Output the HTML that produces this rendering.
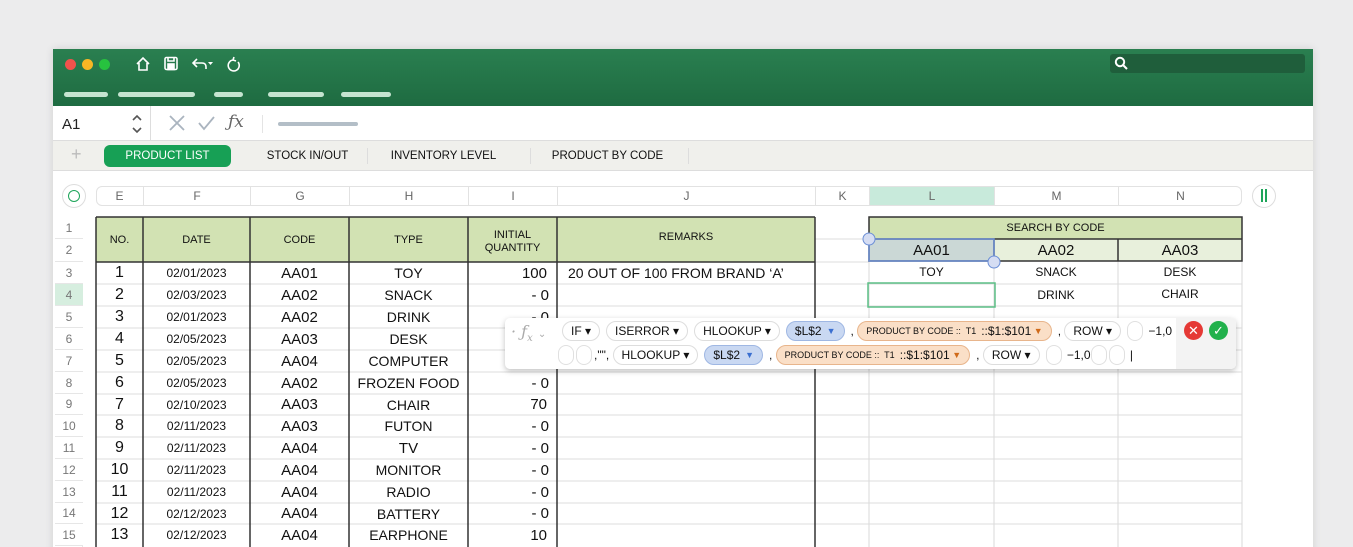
<!DOCTYPE html>
<html><head><meta charset="utf-8"><style>
*{box-sizing:border-box;margin:0;padding:0}
html,body{width:1353px;height:547px;overflow:hidden}
body{background:#ececed;font-family:"Liberation Sans",Arial,sans-serif;position:relative;color:#111}
.a{position:absolute}
.win{left:53px;top:49px;width:1260px;height:510px;background:#fff;box-shadow:0 0 8px rgba(0,0,0,.12)}
.hdr{left:53px;top:49px;width:1260px;height:57px;background:linear-gradient(#2a7f50,#1e6b41)}
.pill{height:5px;border-radius:3px;background:#c5e4d0;top:92px}
.dot{width:11px;height:11px;border-radius:50%;top:59px}
.cell{position:absolute;display:flex;align-items:center;justify-content:center;white-space:nowrap}
.ch{top:186px;height:20px;font-size:12px;color:#666;border-left:1px solid #e2e2e2}
.rn{left:55px;width:28px;font-size:12px;color:#777;border-bottom:1px solid #e6e6e6;background:#fff}
.tok{display:inline-flex;align-items:center;height:20px;border-radius:10px;border:1px solid #ddd;padding:0 8px;font-size:12px;margin-right:6px;background:#fff}
.blue{background:#c9d8f2;border-color:#9fb7e3}
.org{background:#fadfc7;border-color:#e8b58c}
.paren{display:inline-block;width:16px;height:20px;border:1px solid #e0e0e0;border-radius:10px;margin-right:2px;vertical-align:middle}
</style></head><body>
<div class="a win"></div>
<div class="a hdr"></div>
<div class="a dot" style="left:65px;background:#f0524c"></div>
<div class="a dot" style="left:82px;background:#f7b624"></div>
<div class="a dot" style="left:99px;background:#27c23f"></div>
<svg class="a" style="left:135px;top:55px" width="115" height="18" fill="none" stroke="#fff" stroke-width="1.6">
<path d="M2 9 L8 3 L14 9 M4 8 V15 H12 V8"/>
<rect x="30" y="2.5" width="12" height="12" rx="1.5"/><rect x="33" y="9" width="6" height="5.5" fill="#fff"/><path d="M33 3 V6 H39 V3"/>
<path d="M62 4 L58 8 L62 12 M58 8 H67 Q71 8 71 12 V14"/><path d="M73 7 H78 L75.5 10Z" fill="#fff" stroke="none"/>
<path d="M98 5 A5.5 5.5 0 1 0 103 7 M99 2 L98 5 L101 6"/>
</svg>
<div class="a" style="left:1110px;top:54px;width:195px;height:19px;background:#1f5e3b;border-radius:3px"></div>
<svg class="a" style="left:1114px;top:56px" width="16" height="16" fill="none" stroke="#fff" stroke-width="2"><circle cx="6" cy="6" r="4.2"/><path d="M9 9 L13 13"/></svg>
<div class="a pill" style="left:64px;width:44px"></div>
<div class="a pill" style="left:118px;width:77px"></div>
<div class="a pill" style="left:214px;width:29px"></div>
<div class="a pill" style="left:268px;width:56px"></div>
<div class="a pill" style="left:341px;width:50px"></div>
<div class="a" style="left:62px;top:116px;font-size:15px;color:#222">A1</div>
<svg class="a" style="left:130px;top:112px" width="14" height="24" fill="none" stroke="#555" stroke-width="1.6"><path d="M3 8 L7 4 L11 8 M3 16 L7 20 L11 16"/></svg>
<div class="a" style="left:150px;top:106px;width:1px;height:34px;background:#ddd"></div>
<svg class="a" style="left:167px;top:113px" width="90" height="20" fill="none" stroke-width="1.8"><path d="M3 3 L17 17 M17 3 L3 17" stroke="#aab4bf"/><path d="M32 10 L37 16 L47 4" stroke="#aab4bf"/></svg>
<div class="a" style="left:228px;top:112px;font-size:17px;font-style:italic;color:#666;font-family:'DejaVu Serif',serif">ƒx</div>
<div class="a" style="left:262px;top:115px;width:1px;height:18px;background:#e4e4e4"></div>
<div class="a" style="left:278px;top:122px;width:80px;height:4px;border-radius:2px;background:#b3bec7"></div>
<div class="a" style="left:53px;top:140px;width:1260px;height:31px;background:#f0f0ec;border-top:1px solid #ddd;border-bottom:1px solid #ddd"></div>
<div class="a" style="left:71px;top:144px;font-size:18px;color:#bbb">+</div>
<div class="cell" style="left:104px;top:145px;width:127px;height:22px;background:#17a055;border-radius:6px;color:#fff;font-size:11.5px">PRODUCT LIST</div>
<div class="cell" style="left:250px;top:145px;width:115px;height:22px;font-size:11.5px">STOCK IN/OUT</div>
<div class="a" style="left:367px;top:148px;width:1px;height:16px;background:#ddd"></div>
<div class="cell" style="left:375px;top:145px;width:137px;height:22px;font-size:11.5px">INVENTORY LEVEL</div>
<div class="a" style="left:530px;top:148px;width:1px;height:16px;background:#ddd"></div>
<div class="cell" style="left:540px;top:145px;width:135px;height:22px;font-size:11.5px">PRODUCT BY CODE</div>
<div class="a" style="left:688px;top:148px;width:1px;height:16px;background:#ddd"></div>
<div class="a" style="left:62px;top:184px;width:24px;height:24px;border-radius:50%;border:1px solid #ddd"></div>
<div class="a" style="left:68px;top:190px;width:12px;height:12px;border-radius:50%;border:1.5px solid #1ea55a"></div>
<div class="a" style="left:96px;top:186px;width:1146px;height:20px;border:1px solid #e2e2e2;border-radius:6px"></div>
<div class="a" style="left:869px;top:187px;width:125px;height:18px;background:#c8eadb"></div>
<div class="cell ch" style="left:96px;width:47px;border-left:none">E</div>
<div class="cell ch" style="left:143px;width:107px">F</div>
<div class="cell ch" style="left:250px;width:99px">G</div>
<div class="cell ch" style="left:349px;width:119px">H</div>
<div class="cell ch" style="left:468px;width:89px">I</div>
<div class="cell ch" style="left:557px;width:258px">J</div>
<div class="cell ch" style="left:815px;width:54px">K</div>
<div class="cell ch" style="left:869px;width:125px">L</div>
<div class="cell ch" style="left:994px;width:124px">M</div>
<div class="cell ch" style="left:1118px;width:124px">N</div>
<div class="a" style="left:1252px;top:184px;width:24px;height:24px;border-radius:50%;border:1px solid #ddd"></div>
<div class="a" style="left:1261px;top:189px;width:2px;height:13px;background:#1ea55a"></div>
<div class="a" style="left:1265px;top:189px;width:2px;height:13px;background:#1ea55a"></div>
<svg class="a" style="left:0;top:0" width="1353" height="547">
<g stroke="#d8d8d8" stroke-width="1">
<line x1="815" y1="217" x2="815" y2="547"/><line x1="869" y1="217" x2="869" y2="547"/>
<line x1="994" y1="261" x2="994" y2="547"/><line x1="1118" y1="261" x2="1118" y2="547"/><line x1="1242" y1="261" x2="1242" y2="547"/>
</g>
<g stroke="#dcdcdc">
<line x1="96" y1="284" x2="1242" y2="284"/><line x1="96" y1="306" x2="1242" y2="306"/><line x1="96" y1="328" x2="1242" y2="328"/><line x1="96" y1="350" x2="1242" y2="350"/><line x1="96" y1="372" x2="1242" y2="372"/><line x1="96" y1="394" x2="1242" y2="394"/><line x1="96" y1="415" x2="1242" y2="415"/><line x1="96" y1="437" x2="1242" y2="437"/><line x1="96" y1="459" x2="1242" y2="459"/><line x1="96" y1="481" x2="1242" y2="481"/><line x1="96" y1="503" x2="1242" y2="503"/><line x1="96" y1="524" x2="1242" y2="524"/><line x1="815" y1="239" x2="869" y2="239"/><line x1="815" y1="262" x2="869" y2="262"/>
</g>
<rect x="96" y="217" width="719" height="45" fill="#d2e2b3"/>
<g stroke="#333" stroke-width="1.5">
<line x1="96" y1="217" x2="815" y2="217"/><line x1="96" y1="262" x2="815" y2="262"/>
<line x1="96" y1="217" x2="96" y2="547"/><line x1="143" y1="217" x2="143" y2="547"/><line x1="250" y1="217" x2="250" y2="547"/><line x1="349" y1="217" x2="349" y2="547"/><line x1="468" y1="217" x2="468" y2="547"/><line x1="557" y1="217" x2="557" y2="547"/><line x1="815" y1="217" x2="815" y2="547"/>
</g>
<rect x="869" y="217" width="373" height="22" fill="#d2e2b3"/>
<rect x="869" y="239" width="373" height="22" fill="#e8f0dc"/>
<rect x="869" y="239" width="125" height="22" fill="#cbd8d6"/>
<g stroke="#333" stroke-width="1.5"><rect x="869" y="217" width="373" height="44" fill="none"/><line x1="869" y1="239" x2="1242" y2="239"/><line x1="994" y1="239" x2="994" y2="261"/><line x1="1118" y1="239" x2="1118" y2="261"/></g>
<rect x="869" y="239" width="125" height="22" fill="none" stroke="#6c8fd6" stroke-width="1.5"/>
<circle cx="869" cy="239" r="6" fill="#d5ddf3" stroke="#6c8fd6"/><circle cx="994" cy="262" r="6" fill="#d5ddf3" stroke="#6c8fd6"/>
<rect x="868" y="283" width="127" height="24" fill="none" stroke="#5cbf86" stroke-width="1.5"/>
</svg>
<div class="a" style="left:55px;top:217px;width:28px;height:330px;border-right:1px solid #e6e6e6"></div>
<div class="cell rn" style="top:217px;height:22px">1</div>
<div class="cell rn" style="top:239px;height:23px">2</div>
<div class="cell rn" style="top:262px;height:22px">3</div>
<div class="cell rn" style="top:284px;height:22px;background:#d6eedf">4</div>
<div class="cell rn" style="top:306px;height:22px">5</div>
<div class="cell rn" style="top:328px;height:22px">6</div>
<div class="cell rn" style="top:350px;height:22px">7</div>
<div class="cell rn" style="top:372px;height:22px">8</div>
<div class="cell rn" style="top:394px;height:21px">9</div>
<div class="cell rn" style="top:415px;height:22px">10</div>
<div class="cell rn" style="top:437px;height:22px">11</div>
<div class="cell rn" style="top:459px;height:22px">12</div>
<div class="cell rn" style="top:481px;height:22px">13</div>
<div class="cell rn" style="top:503px;height:21px">14</div>
<div class="cell rn" style="top:524px;height:22px">15</div>
<div class="cell" style="left:96px;top:217px;width:47px;height:45px;font-size:11px">NO.</div>
<div class="cell" style="left:143px;top:217px;width:107px;height:45px;font-size:11px">DATE</div>
<div class="cell" style="left:250px;top:217px;width:99px;height:45px;font-size:11px">CODE</div>
<div class="cell" style="left:349px;top:217px;width:119px;height:45px;font-size:11px">TYPE</div>
<div class="cell" style="left:468px;top:217px;width:89px;height:45px;font-size:11px;text-align:center;line-height:13px;padding-top:4px">INITIAL<br>QUANTITY</div>
<div class="cell" style="left:557px;top:217px;width:258px;height:40px;font-size:11px">REMARKS</div>
<div class="cell" style="left:869px;top:217px;width:373px;height:22px;font-size:11px">SEARCH BY CODE</div>
<div class="cell" style="left:869px;top:239px;width:125px;height:22px;font-size:15px">AA01</div>
<div class="cell" style="left:994px;top:239px;width:124px;height:22px;font-size:15px">AA02</div>
<div class="cell" style="left:1118px;top:239px;width:124px;height:22px;font-size:15px">AA03</div>
<div class="cell" style="left:869px;top:262px;width:125px;height:20px;font-size:12px">TOY</div>
<div class="cell" style="left:994px;top:262px;width:124px;height:20px;font-size:12px">SNACK</div>
<div class="cell" style="left:1118px;top:262px;width:124px;height:20px;font-size:12px">DESK</div>
<div class="cell" style="left:994px;top:285px;width:124px;height:20px;font-size:12px">DRINK</div>
<div class="cell" style="left:1118px;top:284px;width:124px;height:20px;font-size:12px">CHAIR</div>
<div class="a" style="left:568px;top:265px;font-size:14px">20 OUT OF 100 FROM BRAND ‘A’</div>
<div class="a" style="left:96px;top:262px;width:461px">
<table style="border-collapse:collapse;table-layout:fixed;width:461px" cellspacing="0">
<colgroup><col style="width:47px"><col style="width:107px"><col style="width:99px"><col style="width:119px"><col style="width:89px"></colgroup>
<tbody style="font-size:14px">
<tr style="height:22px"><td align="center" style="font-size:16px">1</td><td align="center" style="font-size:12px">02/01/2023</td><td align="center" style="font-size:15px">AA01</td><td align="center">TOY</td><td align="right" style="padding-right:10px;font-size:15px">100</td></tr>
<tr style="height:22px"><td align="center" style="font-size:16px">2</td><td align="center" style="font-size:12px">02/03/2023</td><td align="center" style="font-size:15px">AA02</td><td align="center">SNACK</td><td align="right" style="padding-right:8px;font-size:15px">- 0</td></tr>
<tr style="height:22px"><td align="center" style="font-size:16px">3</td><td align="center" style="font-size:12px">02/01/2023</td><td align="center" style="font-size:15px">AA02</td><td align="center">DRINK</td><td align="right" style="padding-right:8px;font-size:15px">- 0</td></tr>
<tr style="height:22px"><td align="center" style="font-size:16px">4</td><td align="center" style="font-size:12px">02/05/2023</td><td align="center" style="font-size:15px">AA03</td><td align="center">DESK</td><td></td></tr>
<tr style="height:22px"><td align="center" style="font-size:16px">5</td><td align="center" style="font-size:12px">02/05/2023</td><td align="center" style="font-size:15px">AA04</td><td align="center">COMPUTER</td><td></td></tr>
<tr style="height:22px"><td align="center" style="font-size:16px">6</td><td align="center" style="font-size:12px">02/05/2023</td><td align="center" style="font-size:15px">AA02</td><td align="center">FROZEN FOOD</td><td align="right" style="padding-right:8px;font-size:15px">- 0</td></tr>
<tr style="height:21px"><td align="center" style="font-size:16px">7</td><td align="center" style="font-size:12px">02/10/2023</td><td align="center" style="font-size:15px">AA03</td><td align="center">CHAIR</td><td align="right" style="padding-right:10px;font-size:15px">70</td></tr>
<tr style="height:22px"><td align="center" style="font-size:16px">8</td><td align="center" style="font-size:12px">02/11/2023</td><td align="center" style="font-size:15px">AA03</td><td align="center">FUTON</td><td align="right" style="padding-right:8px;font-size:15px">- 0</td></tr>
<tr style="height:22px"><td align="center" style="font-size:16px">9</td><td align="center" style="font-size:12px">02/11/2023</td><td align="center" style="font-size:15px">AA04</td><td align="center" style="font-size:15px">TV</td><td align="right" style="padding-right:8px;font-size:15px">- 0</td></tr>
<tr style="height:22px"><td align="center" style="font-size:16px">10</td><td align="center" style="font-size:12px">02/11/2023</td><td align="center" style="font-size:15px">AA04</td><td align="center">MONITOR</td><td align="right" style="padding-right:8px;font-size:15px">- 0</td></tr>
<tr style="height:22px"><td align="center" style="font-size:16px">11</td><td align="center" style="font-size:12px">02/11/2023</td><td align="center" style="font-size:15px">AA04</td><td align="center">RADIO</td><td align="right" style="padding-right:8px;font-size:15px">- 0</td></tr>
<tr style="height:21px"><td align="center" style="font-size:16px">12</td><td align="center" style="font-size:12px">02/12/2023</td><td align="center" style="font-size:15px">AA04</td><td align="center">BATTERY</td><td align="right" style="padding-right:8px;font-size:15px">- 0</td></tr>
<tr style="height:22px"><td align="center" style="font-size:16px">13</td><td align="center" style="font-size:12px">02/12/2023</td><td align="center" style="font-size:15px">AA04</td><td align="center">EARPHONE</td><td align="right" style="padding-right:10px;font-size:15px">10</td></tr>
</tbody></table></div>
<div class="a" style="left:505px;top:318px;width:731px;height:51px;background:#fff;border-radius:5px;box-shadow:0 2px 6px rgba(0,0,0,.25)"></div>
<div class="a" style="left:1176px;top:318px;width:60px;height:51px;background:#f3f3f3;border-radius:0 5px 5px 0"></div>
<div class="a" style="left:511px;top:322px;font-size:16px;color:#aaa;font-style:italic;font-family:'DejaVu Serif',serif">· <span>ƒ<sub style="font-size:10px">x</sub></span> <span style="font-size:10px;font-style:normal">⌄</span></div>
<div class="a" style="left:562px;top:321px;white-space:nowrap;display:flex;align-items:center;font-size:12px">
<span class="tok">IF ▾</span><span class="tok">ISERROR ▾</span><span class="tok">HLOOKUP ▾</span><span class="tok blue">$L$2 <span style="color:#3a6fd0;margin-left:5px;font-size:9px">▼</span></span>,&nbsp;<span class="tok org" style="font-size:9px">PRODUCT BY CODE ::&nbsp; T1 &nbsp;<b style="font-size:12px;font-weight:normal">::$1:$101</b>&nbsp;<span style="color:#d06a1a">▼</span></span>,&nbsp;<span class="tok">ROW ▾</span><span class="paren"></span>&nbsp;−1,0
</div>
<div class="a" style="left:558px;top:345px;white-space:nowrap;display:flex;align-items:center;font-size:12px">
<span class="paren"></span><span class="paren"></span>,"",&nbsp;<span class="tok">HLOOKUP ▾</span><span class="tok blue">$L$2 <span style="color:#3a6fd0;margin-left:5px;font-size:9px">▼</span></span>,&nbsp;<span class="tok org" style="font-size:9px">PRODUCT BY CODE ::&nbsp; T1 &nbsp;<b style="font-size:12px;font-weight:normal">::$1:$101</b>&nbsp;<span style="color:#d06a1a">▼</span></span>,&nbsp;<span class="tok">ROW ▾</span><span class="paren"></span>&nbsp;−1,0<span class="paren"></span><span class="paren"></span>&nbsp;|
</div>
<div class="cell" style="left:1184px;top:321px;width:19px;height:19px;border-radius:50%;background:#e53935;color:#fff;font-size:13px">✕</div>
<div class="cell" style="left:1209px;top:321px;width:19px;height:19px;border-radius:50%;background:#22b14c;color:#fff;font-size:13px">✓</div>
</body></html>
